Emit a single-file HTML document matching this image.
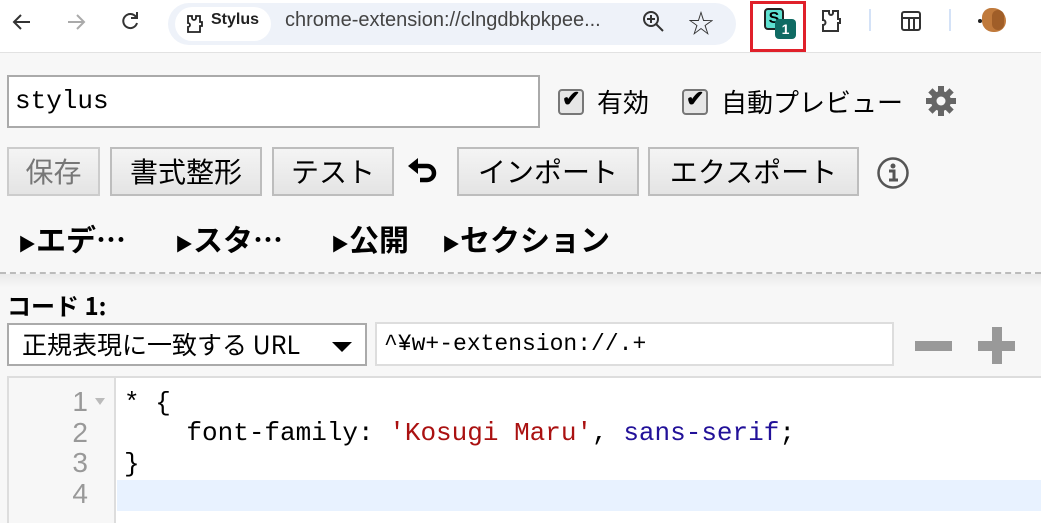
<!DOCTYPE html>
<html><head><meta charset="utf-8">
<style>
*{box-sizing:border-box;margin:0;padding:0}
body{width:1041px;height:523px;overflow:hidden;background:#f7f7f7;position:relative;font-family:"Liberation Sans","Noto Sans CJK JP",sans-serif;color:#000}
.a{position:absolute}
.top{left:0;top:0;width:1041px;height:53px;background:#fff;border-bottom:1px solid #e2e2e2}
.omni{left:168px;top:3px;width:568px;height:42px;background:#eef2f9;border-radius:21px}
.chip{left:175px;top:7px;width:96px;height:34px;background:#fff;border-radius:17px}
.btn{position:absolute;top:147px;height:49px;border:2px solid #bdbdbd;background:linear-gradient(#f4f4f4,#e4e4e4);font-size:28px;line-height:44px;text-align:center;font-family:"Noto Sans CJK JP",sans-serif}
.cb{position:absolute;top:89px;width:26px;height:26px;border:2px solid #777;border-radius:4px;background:#e6e6e6}
.jp{font-family:"Noto Sans CJK JP",sans-serif}
.det{position:absolute;top:216px;font-size:30px;font-weight:bold;font-family:"Noto Sans CJK JP",sans-serif;line-height:44px}
.mono{font-family:"Liberation Mono","Noto Sans CJK JP",monospace}
.ln{position:absolute;left:60px;width:28px;text-align:right;color:#999;font-size:28px;font-family:"Liberation Sans",sans-serif}
.code{position:absolute;left:124px;font-size:26px;font-family:"Liberation Mono",monospace}
</style></head><body>
<div class="a top"></div>
<svg class="a" style="left:10px;top:10px" width="24" height="24" viewBox="0 0 24 24"><path d="M20 12H5M11 5l-7 7 7 7" stroke="#333" stroke-width="2" fill="none"/></svg>
<svg class="a" style="left:64px;top:10px" width="24" height="24" viewBox="0 0 24 24"><path d="M4 12h15M13 5l7 7-7 7" stroke="#aaa" stroke-width="2" fill="none"/></svg>
<svg class="a" style="left:118px;top:9px" width="24" height="24" viewBox="0 0 24 24"><path d="M18 8A7 7 0 1 0 19 14" stroke="#333" stroke-width="2" fill="none"/><path d="M19 3v6h-6" stroke="#333" stroke-width="2" fill="none"/></svg>
<div class="a omni"></div>
<div class="a chip"></div>
<svg class="a" style="left:184px;top:13px" width="20" height="22" viewBox="0 0 20 22"><path d="M4 3h4v2a2 2 0 0 0 4 0V3h4v6h2v4h-2v6H4v-5a2 2 0 0 0 0-4z" stroke="#222" stroke-width="1.8" fill="none"/></svg>
<div class="a" style="left:211px;top:11px;font-size:16px;font-weight:bold;color:#222">Stylus</div>
<div class="a" style="left:285px;top:9px;font-size:20px;color:#444">chrome-extension://clngdbkpkpee...</div>
<svg class="a" style="left:641px;top:9px" width="26" height="26" viewBox="0 0 26 26"><circle cx="10" cy="10" r="7" stroke="#333" stroke-width="2" fill="none"/><path d="M15 15l7 7M10 6v8M6 10h8" stroke="#333" stroke-width="2"/></svg>
<div class="a" style="left:688px;top:4px;font-size:26px;color:#333">☆</div>
<div class="a" style="left:750px;top:1px;width:56px;height:51px;border:3px solid #e0202a"></div>
<div class="a" style="left:764px;top:8px;width:20px;height:22px;background:#5ee0d0;border:2px solid #222;border-radius:4px;font-size:16px;font-weight:bold;text-align:center;line-height:18px">S</div>
<div class="a" style="left:775px;top:19px;width:21px;height:20px;background:#0f6b63;border-radius:4px;color:#fff;font-size:14px;font-weight:bold;text-align:center;line-height:20px">1</div>
<svg class="a" style="left:818px;top:8px" width="26" height="26" viewBox="0 0 26 26"><path d="M5 3h6v2a2 2 0 0 0 4 0V3h5v8h2v4h-2v8H5v-6a2.5 2.5 0 0 0 0-5z" stroke="#333" stroke-width="2" fill="none"/></svg>
<div class="a" style="left:869px;top:9px;width:2px;height:22px;background:#d4e2f7"></div>
<svg class="a" style="left:899px;top:9px" width="24" height="24" viewBox="0 0 24 24"><rect x="3" y="3" width="18" height="18" rx="2" stroke="#333" stroke-width="2" fill="none"/><path d="M3 9h18M10 9v12M15 9v12" stroke="#333" stroke-width="2"/></svg>
<div class="a" style="left:949px;top:9px;width:2px;height:22px;background:#d4e2f7"></div>
<div class="a" style="left:982px;top:8px;width:24px;height:24px;background:#c07a3c;border-radius:10px 14px 12px 12px"></div>
<div class="a" style="left:992px;top:10px;width:12px;height:20px;background:#a05e28;border-radius:6px"></div>
<div class="a" style="left:978px;top:19px;width:4px;height:4px;background:#222;border-radius:2px"></div>

<div class="a" style="left:7px;top:75px;width:533px;height:53px;background:#fff;border:2px solid #aaa"></div>
<div class="a mono" style="left:15px;top:86px;font-size:26px">stylus</div>
<div class="cb" style="left:558px"></div><div class="a" style="left:562px;top:86px;font-size:22px;font-weight:bold">✔</div>
<div class="a jp" style="left:597px;top:83px;font-size:26px">有効</div>
<div class="cb" style="left:682px"></div><div class="a" style="left:686px;top:86px;font-size:22px;font-weight:bold">✔</div>
<div class="a jp" style="left:721px;top:83px;font-size:26px">自動プレビュー</div>
<svg class="a" style="left:925px;top:85px" width="32" height="32" viewBox="0 0 32 32"><g fill="#666"><circle cx="16" cy="16" r="10"/><rect x="13" y="1" width="6" height="30"/><rect x="1" y="13" width="30" height="6"/><rect x="13" y="1" width="6" height="30" transform="rotate(45 16 16)"/><rect x="13" y="1" width="6" height="30" transform="rotate(-45 16 16)"/></g><circle cx="16" cy="16" r="4.5" fill="#f7f7f7"/></svg>

<div class="btn" style="left:7px;width:93px;color:#777;border-color:#ccc">保存</div>
<div class="btn" style="left:110px;width:152px">書式整形</div>
<div class="btn" style="left:272px;width:122px">テスト</div>
<svg class="a" style="left:406px;top:157px" width="34" height="30" viewBox="0 0 34 30"><path d="M10 9h11a7 7 0 0 1 0 14h-7" stroke="#000" stroke-width="4.5" fill="none"/><path d="M2 9l10-8v16z" fill="#000"/></svg>
<div class="btn" style="left:457px;width:182px">インポート</div>
<div class="btn" style="left:648px;width:211px">エクスポート</div>
<svg class="a" style="left:876px;top:156px" width="34" height="34" viewBox="0 0 34 34"><circle cx="17" cy="17" r="14.5" stroke="#555" stroke-width="2.5" fill="none"/><circle cx="17" cy="10" r="2.5" fill="#555"/><path d="M13 15h5v9M13 24h9" stroke="#555" stroke-width="3" fill="none"/></svg>

<div class="det" style="left:18px"><span style="font-size:18px">▶</span>エデ…</div>
<div class="det" style="left:175px"><span style="font-size:18px">▶</span>スタ…</div>
<div class="det" style="left:331px"><span style="font-size:18px">▶</span>公開</div>
<div class="det" style="left:442px"><span style="font-size:18px">▶</span>セクション</div>
<div class="a" style="left:0;top:272px;width:1041px;border-top:2px dashed #bbb"></div>
<div class="a" style="left:0;top:274px;width:1041px;height:14px;background:linear-gradient(#e9e9e9,#f7f7f7)"></div>

<div class="a jp" style="left:7px;top:289px;font-size:24px;font-weight:bold;line-height:32px">コード 1:</div>
<div class="a" style="left:7px;top:323px;width:360px;height:43px;background:#fff;border:2px solid #aaa"></div>
<div class="a jp" style="left:22px;top:327px;font-size:25px;line-height:34px">正規表現に一致する URL</div>
<div class="a" style="left:332px;top:342px;width:0;height:0;border-left:10px solid transparent;border-right:10px solid transparent;border-top:10px solid #000"></div>
<div class="a" style="left:375px;top:322px;width:519px;height:44px;background:#fff;border:2px solid #ddd"></div>
<div class="a mono" style="left:384px;top:331px;font-size:23px">^¥w+-extension://.+</div>
<div class="a" style="left:915px;top:341px;width:37px;height:10px;background:#999"></div>
<div class="a" style="left:978px;top:341px;width:37px;height:10px;background:#999"></div>
<div class="a" style="left:992px;top:327px;width:10px;height:37px;background:#999"></div>

<div class="a" style="left:7px;top:376px;width:1034px;height:147px;background:#fff;border-top:2px solid #ddd;border-left:2px solid #ddd"></div>
<div class="a" style="left:9px;top:378px;width:107px;height:145px;background:#f7f7f7;border-right:2px solid #ddd"></div>
<div class="a" style="left:117px;top:480px;width:924px;height:31px;background:#e8f2ff"></div>
<div class="ln" style="top:386px">1</div><div class="a" style="left:95px;top:398px;width:0;height:0;border-left:5px solid transparent;border-right:5px solid transparent;border-top:7px solid #bbb"></div>
<div class="ln" style="top:417px">2</div>
<div class="ln" style="top:447px">3</div>
<div class="ln" style="top:478px">4</div>
<div class="code" style="top:388px">* {</div>
<div class="code" style="top:418px">&nbsp;&nbsp;&nbsp;&nbsp;font-family: <span style="color:#a11">'Kosugi Maru'</span>, <span style="color:#219">sans-serif</span>;</div>
<div class="code" style="top:449px">}</div>
</body></html>
